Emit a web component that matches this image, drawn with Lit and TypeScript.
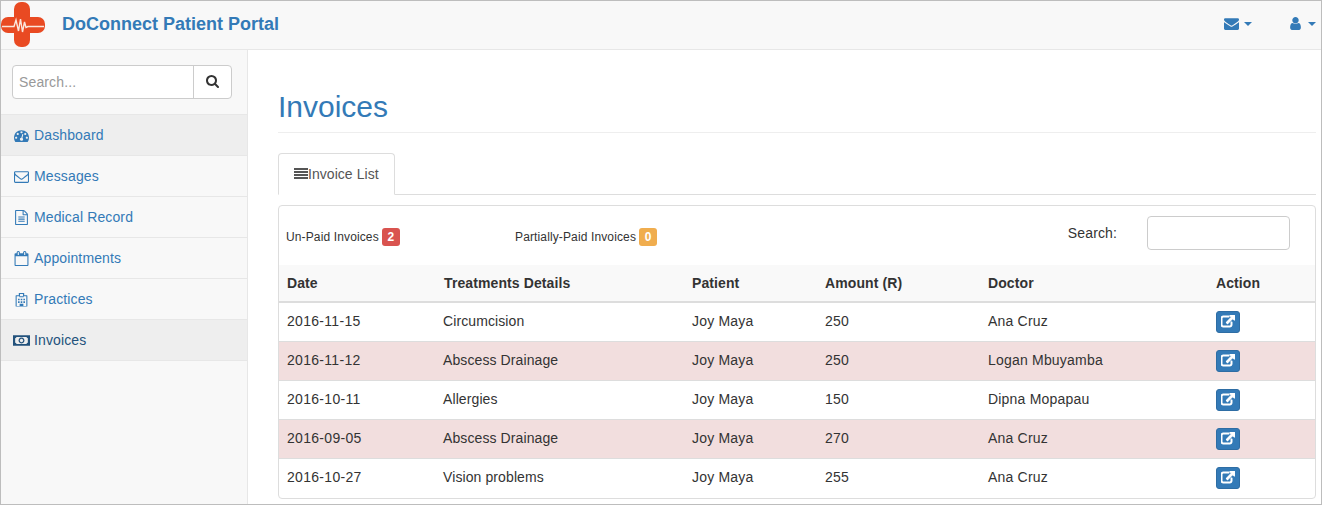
import { LitElement, html, css, svg } from "lit";
import { customElement } from "lit/decorators.js";

const icon = (d: any, cls = "", box = "0 0 1792 1792") =>
  html`<svg class="fa ${cls}" viewBox=${box} fill="currentColor">${d}</svg>`;

const ICONS: Record<string, any> = {
  search: svg`<path d="M1152 704q0-185-131.5-316.5t-316.5-131.5-316.5 131.5-131.5 316.5 131.5 316.5 316.5 131.5 316.5-131.5 131.5-316.5zm512 832q0 52-38 90t-90 38q-54 0-90-38l-343-342q-179 124-399 124-143 0-273.5-55.5t-225-150-150-225-55.5-273.5 55.5-273.5 150-225 225-150 273.5-55.5 273.5 55.5 225 150 150 225 55.5 273.5q0 220-124 399l343 343q37 37 37 90z" />`,
  envelope: svg`<path d="M1792 710v794q0 66-47 113t-113 47h-1472q-66 0-113-47t-47-113v-794q44 49 101 87 362 246 497 345 57 42 92.5 65.5t94.5 48 110 24.5h2q51 0 110-24.5t94.5-48 92.5-65.5q170-123 498-345 57-39 100-87zm0-294q0 79-49 151t-122 123q-376 261-468 325-10 7-42.5 30.5t-54 38-52 32.5-57.5 27-50 9h-2q-23 0-50-9t-57.5-27-52-32.5-54-38-42.5-30.5q-91-64-262-182.5t-205-142.5q-62-42-117-115.5t-55-136.5q0-78 41.5-130t118.5-52h1472q65 0 112.5 47t47.5 113z" />`,
  user: svg`<path d="M1536 1399q0 109-62.5 187t-150.5 78h-854q-88 0-150.5-78t-62.5-187q0-85 8.5-160.5t31.5-152 58.5-131 94-89 134.5-34.5q131 128 313 128t313-128q76 0 134.5 34.5t94 89 58.5 131 31.5 152 8.5 160.5zm-256-887q0 159-112.5 271.5t-271.5 112.5-271.5-112.5-112.5-271.5 112.5-271.5 271.5-112.5 271.5 112.5 112.5 271.5z" />`,
  dashboard: svg`<path d="M384 1152q0-53-37.5-90.5t-90.5-37.5-90.5 37.5-37.5 90.5 37.5 90.5 90.5 37.5 90.5-37.5 37.5-90.5zm192-448q0-53-37.5-90.5t-90.5-37.5-90.5 37.5-37.5 90.5 37.5 90.5 90.5 37.5 90.5-37.5 37.5-90.5zm428 481l101-382q6-26-7.5-48.5t-38.5-29.5-48 6.5-30 39.5l-101 382q-60 5-107 43.5t-63 98.5q-20 77 20 146t117 89 146-20 89-117q16-60-6-117t-72-91zm660-33q0-53-37.5-90.5t-90.5-37.5-90.5 37.5-37.5 90.5 37.5 90.5 90.5 37.5 90.5-37.5 37.5-90.5zm-640-640q0-53-37.5-90.5t-90.5-37.5-90.5 37.5-37.5 90.5 37.5 90.5 90.5 37.5 90.5-37.5 37.5-90.5zm448 192q0-53-37.5-90.5t-90.5-37.5-90.5 37.5-37.5 90.5 37.5 90.5 90.5 37.5 90.5-37.5 37.5-90.5zm320 448q0 261-141 483-19 29-54 29h-1402q-35 0-54-29-141-221-141-483 0-182 71-348t191-286 286-191 348-71 348 71 286 191 191 286 71 348z" />`,
  envelopeO: svg`<path d="M1664 1504v-768q-32 36-69 66-268 206-426 338-51 43-83 67t-86.5 48.5-102.5 24.5h-2q-48 0-102.5-24.5t-86.5-48.5-83-67q-158-132-426-338-37-30-69-66v768q0 13 9.5 22.5t22.5 9.5h1472q13 0 22.5-9.5t9.5-22.5zm0-1051v-24.5l-.5-13-3-12.5-5.5-9-9-7.5-14-2.5h-1472q-13 0-22.5 9.5t-9.5 22.5q0 168 147 284 193 152 401 317 6 5 35 29.5t46 37.5 44.5 31.5 50.5 27.5 43 9h2q20 0 43-9t50.5-27.5 44.5-31.5 46-37.5 35-29.5q208-165 401-317 54-43 100.5-115.5t46.5-131.5zm128-37v1088q0 66-47 113t-113 47h-1472q-66 0-113-47t-47-113v-1088q0-66 47-113t113-47h1472q66 0 113 47t47 113z" />`,
  file: svg`<path d="M1596 380q28 28 48 76t20 88v1152q0 40-28 68t-68 28h-1344q-40 0-68-28t-28-68v-1600q0-40 28-68t68-28h896q40 0 88 20t76 48zm-444-244v376h376q-10-29-22-41l-313-313q-12-12-41-22zm384 1528v-1024h-416q-40 0-68-28t-28-68v-416h-768v1536h1280zm-1024-864q0-14 9-23t23-9h704q14 0 23 9t9 23v64q0 14-9 23t-23 9h-704q-14 0-23-9t-9-23v-64zm736 224q14 0 23 9t9 23v64q0 14-9 23t-23 9h-704q-14 0-23-9t-9-23v-64q0-14 9-23t23-9h704zm0 256q14 0 23 9t9 23v64q0 14-9 23t-23 9h-704q-14 0-23-9t-9-23v-64q0-14 9-23t23-9h704z" />`,
  calendar: svg`<path d="M192 1664h1408v-1024h-1408v1024zm384-1216v-288q0-14-9-23t-23-9h-64q-14 0-23 9t-9 23v288q0 14 9 23t23 9h64q14 0 23-9t9-23zm768 0v-288q0-14-9-23t-23-9h-64q-14 0-23 9t-9 23v288q0 14 9 23t23 9h64q14 0 23-9t9-23zm384-64v1280q0 52-38 90t-90 38h-1408q-52 0-90-38t-38-90v-1280q0-52 38-90t90-38h128v-96q0-66 47-113t113-47h64q66 0 113 47t47 113v96h384v-96q0-66 47-113t113-47h64q66 0 113 47t47 113v96h128q52 0 90 38t38 90z" />`,
  hospital: svg`<path fill-rule="evenodd" d="M576 128h640v256h320q64 0 64 64v1216q0 64-64 64h-1280q-64 0-64-64v-1216q0-64 64-64h320zM720 240v260h352v-260zM320 512v1152h352v-256h448v256h352v-1152h-320v128h-512v-128zM480 800h192v192h-192zM800 800h192v192h-192zM1120 800h192v192h-192zM480 1110h192v192h-192zM800 1110h192v192h-192zM1120 1110h192v192h-192z" />`,
  money: svg`<path fill-rule="evenodd" d="M0 256h2048v1280h-2048zM420 480q-20 110-160 130v572q140 20 160 130h1208q20-110 160-130v-572q-140-20-160-130zM1024 540a356 356 0 1 0 .1 0zM1024 690a206 206 0 1 1 -.1 0z" />`,
  link: svg`<path d="M1408 928v320q0 119-84.5 203.5t-203.5 84.5h-832q-119 0-203.5-84.5t-84.5-203.5v-832q0-119 84.5-203.5t203.5-84.5h704q14 0 23 9t9 23v64q0 14-9 23t-23 9h-704q-66 0-113 47t-47 113v832q0 66 47 113t113 47h832q66 0 113-47t47-113v-320q0-14 9-23t23-9h64q14 0 23 9t9 23zm384-864v512q0 26-19 45t-45 19-45-19l-176-176-652 652q-10 10-23 10t-23-10l-114-114q-10-10-10-23t10-23l652-652-176-176q-19-19-19-45t19-45 45-19h512q26 0 45 19t19 45z" />`,
};

const NAV = [
  { label: "Dashboard", icon: "dashboard", cls: "open" },
  { label: "Messages", icon: "envelopeO", cls: "" },
  { label: "Medical Record", icon: "file", cls: "" },
  { label: "Appointments", icon: "calendar", cls: "" },
  { label: "Practices", icon: "hospital", cls: "" },
  { label: "Invoices", icon: "money", cls: "active" },
];

const ROWS = [
  { date: "2016-11-15", what: "Circumcision", patient: "Joy Maya", amount: "250", doctor: "Ana Cruz", unpaid: false },
  { date: "2016-11-12", what: "Abscess Drainage", patient: "Joy Maya", amount: "250", doctor: "Logan Mbuyamba", unpaid: true },
  { date: "2016-10-11", what: "Allergies", patient: "Joy Maya", amount: "150", doctor: "Dipna Mopapau", unpaid: false },
  { date: "2016-09-05", what: "Abscess Drainage", patient: "Joy Maya", amount: "270", doctor: "Ana Cruz", unpaid: true },
  { date: "2016-10-27", what: "Vision problems", patient: "Joy Maya", amount: "255", doctor: "Ana Cruz", unpaid: false },
];

@customElement("app-root")
export class AppRoot extends LitElement {
  static styles = css`
    :host {
      display: block;
      box-sizing: border-box;
      height: 505px;
      overflow: hidden;
      border: 1px solid #bdbdbd;
      background: #fff;
      color: #333;
      font-family: "Liberation Sans", Arial, sans-serif;
      font-size: 14px;
      line-height: 20px;
    }
    * { box-sizing: border-box; }
    .fa { display: block; flex: none; }

    .topbar {
      display: flex;
      align-items: center;
      height: 49px;
      background: #f8f8f8;
      border-bottom: 1px solid #e7e7e7;
    }
    .logo { display: block; flex: none; width: 46px; height: 48px; margin-left: -1px; }
    .brand {
      margin: 0 0 2px 16px;
      font-size: 18px;
      font-weight: bold;
      color: #337ab7;
    }
    .topnav { display: flex; margin: 0 0 3px auto; color: #337ab7; }
    .dropdown { display: flex; align-items: center; gap: 5px; }
    .dropdown.mail { margin-right: 36px; }
    .dropdown.user { margin-right: 5px; }
    .dropdown .fa { width: 15px; height: 15px; }
    .caret {
      width: 0;
      height: 0;
      border-top: 4px solid #337ab7;
      border-left: 4px solid transparent;
      border-right: 4px solid transparent;
    }

    .body { display: flex; height: 454px; }
    .sidebar {
      flex: none;
      width: 247px;
      background: #f8f8f8;
      border-right: 1px solid #e7e7e7;
      letter-spacing: 0.13px;
    }
    .search-wrap { padding: 15px 15px 15px 11px; height: 65px; border-bottom: 1px solid #e7e7e7; }
    .search {
      display: flex;
      width: 220px;
      height: 34px;
      background: #fff;
      border: 1px solid #ccc;
      border-radius: 4px;
    }
    .search span {
      flex: 1;
      padding: 6px;
      color: #999;
      line-height: 20px;
    }
    .search button {
      display: flex;
      align-items: center;
      justify-content: center;
      width: 38px;
      padding: 0;
      border: none;
      border-left: 1px solid #ccc;
      background: none;
      color: #333;
    }
    .search button .fa { width: 14px; height: 14px; }
    .nav-item {
      display: flex;
      align-items: center;
      gap: 5px;
      height: 41px;
      padding-left: 13px;
      border-bottom: 1px solid #e7e7e7;
      color: #337ab7;
    }
    .nav-item .fa { width: 15px; height: 15px; }
    .nav-item .fa.wide { width: 17px; margin: 0 -1px 0 -1px; }
    .nav-item.open { background: #eee; }
    .nav-item.active { background: #eee; color: #23527c; }

    .main { flex: 1; min-width: 0; padding: 0 5px 0 30px; letter-spacing: 0.13px; }
    h1 {
      margin: 39px 0 20px;
      height: 44px;
      padding-bottom: 7px;
      border-bottom: 1px solid #eee;
      font-size: 30px;
      font-weight: normal;
      line-height: 36px;
      letter-spacing: 0;
      color: #337ab7;
    }
    .tabs { display: flex; height: 42px; border-bottom: 1px solid #ddd; }
    .tab {
      display: flex;
      align-items: center;
      height: 42px;
      padding: 0 15px;
      color: #555;
      background: #fff;
      border: 1px solid #ddd;
      border-bottom-color: #fff;
      border-radius: 4px 4px 0 0;
      letter-spacing: 0.05px;
    }
    .tab .fa { width: 14px; height: 14px; }
    .panel {
      margin-top: 10px;
      height: 294px;
      border: 1px solid #ddd;
      border-radius: 4px;
      overflow: hidden;
    }
    .toolbar { display: flex; align-items: center; height: 59px; padding-left: 7px; }
    .count { display: flex; align-items: center; gap: 3px; font-size: 12px; margin-top: 2px; }
    .count.unpaid { width: 229px; }
    .badge {
      width: 18px;
      height: 18px;
      border-radius: 3px;
      font-size: 12px;
      font-weight: bold;
      line-height: 18px;
      letter-spacing: 0;
      text-align: center;
      color: #fff;
    }
    .badge.red { background: #d9534f; }
    .badge.amber { background: #f0ad4e; }
    .filter { display: flex; align-items: center; margin: 0 25px 5px auto; }
    .filter label { margin-right: 30px; }
    .filter input {
      width: 143px;
      height: 34px;
      border: 1px solid #ccc;
      border-radius: 4px;
      background: #fff;
    }

    table { width: 100%; border-collapse: collapse; table-layout: fixed; }
    th {
      height: 37px;
      padding: 0 8px;
      text-align: left;
      background: #f9f9f9;
      border-bottom: 2px solid #ddd;
      letter-spacing: 0.1px;
    }
    th.details { padding-left: 9px; }
    td { height: 39px; padding: 0 8px 2px; border-top: 1px solid #ddd; letter-spacing: 0.2px; }
    td.date { letter-spacing: 0.3px; }
    td.what { letter-spacing: 0.1px; }
    td.action { padding-bottom: 0; }
    tbody tr:first-child td { border-top: none; }
    tr.unpaid td { background: #f2dede; }
    .open-btn {
      display: flex;
      align-items: center;
      justify-content: center;
      width: 24px;
      height: 22px;
      padding: 0;
      border: 1px solid #2e6da4;
      border-radius: 3px;
      background: #337ab7;
      color: #fff;
    }
    .open-btn .fa { width: 14px; height: 14px; stroke: #fff; stroke-width: 130; }
  `;

  private renderLogo() {
    return html`<svg class="logo" viewBox="0 0 46 48">
      <rect x="14" y="1" width="16" height="45" rx="7" fill="#e94a22" />
      <rect x="1" y="16" width="44" height="16" rx="7" fill="#e94a22" />
      <path d="M2 25.5H14L16 19L18.5 30L20.5 18L22.5 31L24.5 21L26 26.5L28 25.5H44" fill="none" stroke="#fbe6dc" stroke-width="1.4" />
    </svg>`;
  }

  render() {
    return html`
      <header class="topbar">
        ${this.renderLogo()}
        <span class="brand">DoConnect Patient Portal</span>
        <div class="topnav">
          <div class="dropdown mail">${icon(ICONS.envelope)}<span class="caret"></span></div>
          <div class="dropdown user">${icon(ICONS.user)}<span class="caret"></span></div>
        </div>
      </header>
      <div class="body">
        <nav class="sidebar">
          <div class="search-wrap">
            <div class="search">
              <span>Search...</span>
              <button>${icon(ICONS.search)}</button>
            </div>
          </div>
          ${NAV.map(n => html`<div class="nav-item ${n.cls}">
            ${n.icon === "money" ? icon(ICONS.money, "wide", "0 0 2048 1792") : icon(ICONS[n.icon])}
            <span>${n.label}</span>
          </div>`)}
        </nav>
        <main class="main">
          <h1>Invoices</h1>
          <div class="tabs">
            <div class="tab">
              <svg class="fa" viewBox="0 0 14 14" fill="currentColor">
                <rect y="1" width="14" height="2" /><rect y="4" width="14" height="2" />
                <rect y="7" width="14" height="2" /><rect y="10" width="14" height="2" />
              </svg>Invoice List
            </div>
          </div>
          <section class="panel">
            <div class="toolbar">
              <div class="count unpaid">Un-Paid Invoices <span class="badge red">2</span></div>
              <div class="count">Partially-Paid Invoices <span class="badge amber">0</span></div>
              <div class="filter"><label>Search:</label><input type="text" /></div>
            </div>
            <table>
              <colgroup>
                <col style="width:156px" /><col style="width:249px" /><col style="width:133px" />
                <col style="width:163px" /><col style="width:228px" /><col />
              </colgroup>
              <thead>
                <tr><th>Date</th><th class="details">Treatments Details</th><th>Patient</th><th>Amount (R)</th><th>Doctor</th><th>Action</th></tr>
              </thead>
              <tbody>
                ${ROWS.map(r => html`<tr class=${r.unpaid ? "unpaid" : ""}>
                  <td class="date">${r.date}</td><td class="what">${r.what}</td><td>${r.patient}</td><td>${r.amount}</td><td>${r.doctor}</td>
                  <td class="action"><button class="open-btn">${icon(ICONS.link)}</button></td>
                </tr>`)}
              </tbody>
            </table>
          </section>
        </main>
      </div>
    `;
  }
}
